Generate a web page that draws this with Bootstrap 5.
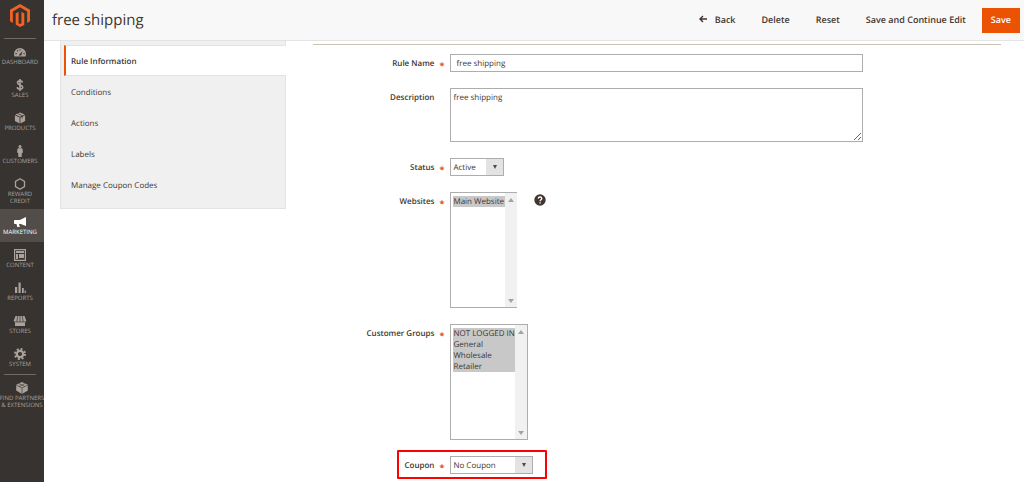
<!DOCTYPE html>
<html lang="en">
<head>
<meta charset="utf-8">
<meta name="viewport" content="width=device-width, initial-scale=1">
<title>free shipping</title>
<link rel="stylesheet" href="https://cdn.jsdelivr.net/npm/bootstrap@5.3.0/dist/css/bootstrap.min.css">
<style>
body{font-family:"Open Sans",sans-serif;font-size:8px;line-height:11px;color:#41362f;background:#fff;text-rendering:geometricPrecision}
input,select,textarea,button{text-rendering:inherit}
.side-menu{width:44px;background:#373330;color:#aaa29b}
.side-menu a{color:inherit;min-height:33px;padding:7px 4px 2px 0;font-size:6px;line-height:7px;white-space:nowrap}
.side-menu svg{width:14px;height:12px;margin-bottom:1px;fill:currentColor}
.side-menu .brand{height:38px;padding-top:4px}
.side-menu .brand svg{width:20px;height:23px;fill:#f26322;margin:0}
.side-menu a.current{background:#524d49;color:#fff}
.rule{height:1px;margin:0 8px 0 4px;background:#736963}
.top-bar{height:41px;background:#f8f8f8;border-bottom:1px solid #e3e3e3;padding:0 4px 0 8px}
.top-bar h1{font-size:15px;line-height:20px;margin:0;color:#41362f}
.top-bar .btn{font-size:9px;line-height:13px;font-weight:600;color:#41362f;padding:5px 13px 7px;border:0;border-radius:0}
.top-bar .btn-save{background:#eb5202;color:#fff;padding:5px 9px 7px;min-height:25px;margin-left:3px}
.page-body{padding:0 23px 0 16px;column-gap:27px}
.tabs{flex:0 0 24%;background:#f0f0f0;border:1px solid #e3e3e3;border-top:0;padding:4px 0 8px 3px}
.tabs a{height:31px;padding:2px 0 0 7px;color:#41362f}
.tabs a.current{background:#fff;border-left:2px solid #eb5202;padding-left:5px;font-weight:600;border-top:1px solid #e3e3e3;border-bottom:1px solid #e3e3e3;margin-right:-1px}
.edit-form{margin-top:3px;border-top:1px solid #cac3b4;padding-top:9px;min-width:0}
.field{margin-bottom:16px}
.field>label{flex:0 0 20%;text-align:right;padding:4px 16px 0 0;font-weight:600;position:relative}
.field .req::after{content:"*";position:absolute;right:6px;top:6px;color:#eb5202;font-size:9px;font-weight:700}
.wide{flex:0 0 60%}
.field .form-control,.field .form-select{font-size:8px;line-height:11px;color:#41362f;border:1px solid #adadad;border-radius:0;padding:3px 5px 2px;min-height:18px;height:18px}
.field textarea.form-control{height:54px;padding:3px 2px}
.field .form-select{padding:3px 18px 2px 2px;background:linear-gradient(#e3e3e3,#e3e3e3) right/17px 100% no-repeat}
.pick{position:relative}
.pick::after{content:"";position:absolute;right:7px;top:7px;border:2px solid transparent;border-top:4px solid #514943;border-bottom:0;pointer-events:none}
.w-status{width:54px}.w-coupon{width:83px}.w-sites{width:67px}.w-groups{width:78px}
.listbox{height:116px;border:1px solid #adadad}
.listbox select{flex:1;min-width:0;border:0;outline:0;padding:3px 0 2px 2px;overflow:hidden;font-size:8px;color:#41362f;background:#fff}
.listbox option{padding:0;min-height:11px;line-height:11px}
.listbox option:checked{background:#c8c8c8 linear-gradient(#c8c8c8,#c8c8c8);color:#41362f}
.track{width:12px;background:#f1f1f1;padding:5px 0 4px}
.track svg{width:6px;height:4px;fill:#a3a3a3}
.help{width:12px;height:12px;margin:2px 0 0 17px}
.marked{position:relative}
.marked::before{content:"";position:absolute;left:calc(20% - 53px);width:150px;top:-6px;bottom:-5px;border:2px solid #f00;border-radius:1px;pointer-events:none}
</style>
</head>
<body>
<div class="d-flex min-vh-100">
<nav class="side-menu flex-shrink-0 overflow-hidden" aria-label="Main menu">
  <a href="#" class="brand d-flex flex-column align-items-center" aria-label="Home"><svg viewBox="0 0 40 46"><path d="M20 0 40 11.500v23l-5.700 3.300v-23L20 6.600 5.700 14.800v23L0 34.500v-23zM17.100 15.500v23l2.900 1.700 2.900-1.700v-23l5.700 3.300v23L20 46l-8.600-4.900V18.800z"/></svg></a>
  <div class="rule"></div>
  <a href="#" class="d-flex flex-column align-items-center text-decoration-none"><svg viewBox="0 0 14 12"><path fill-rule="evenodd" d="M1.500 10.500A6 6 0 0 1 1 8a6 6 0 0 1 12 0c0 1-.2 1.800-.5 2.500zM6 9.500h2.200L9.700 5 6.300 8.500zM2.500 7v1.200h1.200V7zM4 4.300v1.200h1.200V4.300zM6.400 3.200v1.200h1.200V3.200zM10.500 7v1.200h1.200V7z"/></svg>DASHBOARD</a>
  <a href="#" class="d-flex flex-column align-items-center text-decoration-none"><svg viewBox="0 0 14 12"><path d="M7 0v12M9.500 3.700C9 1.200 4.500 1.300 4.500 3.700c0 2.600 5.200 1.800 5.200 4.500 0 2.700-5.100 2.600-5.500-.1" fill="none" stroke="currentColor" stroke-width="1.600"/></svg>SALES</a>
  <a href="#" class="d-flex flex-column align-items-center text-decoration-none"><svg viewBox="0 0 14 12"><path d="m7 .5 4.700 2L7 4.700 2.300 2.500zM1.900 3.300l4.700 2.200v6L1.900 9zM12.100 3.300 7.400 5.500v6L12.100 9z"/><path d="m4.500 1.500 4.700 2.200v2.600" stroke="#373330" stroke-width=".8" fill="none"/></svg>PRODUCTS</a>
  <a href="#" class="d-flex flex-column align-items-center text-decoration-none"><svg viewBox="0 0 14 12"><circle cx="7" cy="1.500" r="1.500"/><path d="M5.300 3.300h3.400q.8.200.9 1L10 7.800H8.900L8.600 12H5.400L5.100 7.800H4l.4-3.500q.1-.8.900-1z"/></svg>CUSTOMERS</a>
  <a href="#" class="d-flex flex-column align-items-center text-decoration-none text-center pb-1"><svg viewBox="0 0 14 12"><path d="m7 .8 4.500 2.600v5.200L7 11.200 2.500 8.600V3.400z" fill="none" stroke="currentColor" stroke-width="1.300"/></svg>REWARD<br>CREDIT</a>
  <a href="#" class="current d-flex flex-column align-items-center text-decoration-none" aria-current="page"><svg viewBox="0 0 14 12"><path d="M13 1v9L7.800 8H6l.8 3H4.300L3.500 8H1.300Q.5 6 1.300 4h5.500z"/></svg>MARKETING</a>
  <a href="#" class="d-flex flex-column align-items-center text-decoration-none"><svg viewBox="0 0 14 12"><path fill-rule="evenodd" d="M1 0h12v12H1zM2.200 1.200v9.600h9.600V1.200z"/><path d="M3 2h8v2H3zM3 5h2v5H3zM6 5h5v4H6z"/></svg>CONTENT</a>
  <a href="#" class="d-flex flex-column align-items-center text-decoration-none"><svg viewBox="0 0 14 12"><path d="M2 5h2.200v6H2zM5.500.5h2.200V11H5.500zM9 6h1.800v5H9zM11.600 8.500h1.200V11h-1.200z"/></svg>REPORTS</a>
  <a href="#" class="d-flex flex-column align-items-center text-decoration-none"><svg viewBox="0 0 14 12"><path d="M2.500 1h9l1.800 5q-.3 1.400-1.300 1.400V11H2V7.400Q1 7.400.7 6z"/><path d="M4.700 1 3.800 6.700M7 1v5.700M9.300 1l.9 5.700M1 6.900h12" stroke="#373330" stroke-width=".7" fill="none"/></svg>STORES</a>
  <a href="#" class="d-flex flex-column align-items-center text-decoration-none"><svg viewBox="0 0 14 12"><circle cx="7" cy="6" r="3.200" fill="none" stroke="currentColor" stroke-width="2.200"/><circle cx="7" cy="6" r="5" fill="none" stroke="currentColor" stroke-width="2" stroke-dasharray="2 1.927"/></svg>SYSTEM</a>
  <div class="rule"></div>
  <a href="#" class="d-flex flex-column align-items-center text-decoration-none text-center px-0"><svg viewBox="0 0 14 12"><path d="M7 0 12.800 2.800V8.500L7 12 1.200 8.500V2.800z"/><path d="M1.200 3 7 6l5.800-3M7 6v6M4 1.600l5.800 3M9.900 1.600l-5.800 3" stroke="#373330" stroke-width=".6" fill="none"/></svg>FIND PARTNERS<br>&amp; EXTENSIONS</a>
</nav>
<main class="flex-grow-1">
  <header class="top-bar d-flex align-items-center justify-content-between">
    <h1 class="fw-normal">free shipping</h1>
    <div class="d-flex align-items-center">
      <button type="button" class="btn d-flex align-items-center gap-2"><svg width="8" height="8" viewBox="0 0 8 8" fill="none" stroke="currentColor" stroke-width="1.400"><path d="M8 4H1M4 1 1 4l3 3"/></svg>Back</button>
      <button type="button" class="btn">Delete</button>
      <button type="button" class="btn">Reset</button>
      <button type="button" class="btn">Save and Continue Edit</button>
      <button type="button" class="btn btn-save">Save</button>
    </div>
  </header>
  <div class="page-body d-flex align-items-start">
    <nav class="tabs" aria-label="Rule sections">
      <a href="#" class="current d-flex align-items-center text-decoration-none">Rule Information</a>
      <a href="#" class="d-flex align-items-center text-decoration-none">Conditions</a>
      <a href="#" class="d-flex align-items-center text-decoration-none">Actions</a>
      <a href="#" class="d-flex align-items-center text-decoration-none">Labels</a>
      <a href="#" class="d-flex align-items-center text-decoration-none">Manage Coupon Codes</a>
    </nav>
    <form class="edit-form flex-grow-1">
      <div class="field d-flex align-items-start"><label class="req" for="name">Rule Name</label><div class="wide"><input class="form-control" id="name" value="free shipping"></div></div>
      <div class="field d-flex align-items-start"><label for="desc">Description</label><div class="wide d-flex"><textarea class="form-control" id="desc">free shipping</textarea></div></div>
      <div class="field d-flex align-items-start"><label class="req" for="status">Status</label><div class="pick w-status"><select class="form-select" id="status"><option>Active</option><option>Inactive</option></select></div></div>
      <div class="field d-flex align-items-start"><label class="req" for="sites">Websites</label>
        <div class="listbox w-sites d-flex border-end-0"><select multiple id="sites"><option selected>Main Website</option></select><div class="track d-flex flex-column justify-content-between align-items-center"><svg viewBox="0 0 6 4"><path d="M0 4h6L3 0z"/></svg><svg viewBox="0 0 6 4"><path d="M0 0h6L3 4z"/></svg></div></div>
        <svg class="help" viewBox="0 0 12 12" role="img" aria-label="Help"><circle cx="6" cy="6" r="5.700" fill="#41362f"/><path d="M4.200 4.600C4.300 2.400 7.800 2.500 7.800 4.500 7.800 5.800 6.100 5.800 6.100 7.300M6.100 8.200v1.300" fill="none" stroke="#fff" stroke-width="1.300"/></svg></div>
      <div class="field d-flex align-items-start"><label class="req" for="groups">Customer Groups</label>
        <div class="listbox w-groups d-flex"><select multiple id="groups"><option selected>NOT LOGGED IN</option><option selected>General</option><option selected>Wholesale</option><option selected>Retailer</option></select><div class="track d-flex flex-column justify-content-between align-items-center"><svg viewBox="0 0 6 4"><path d="M0 4h6L3 0z"/></svg><svg viewBox="0 0 6 4"><path d="M0 0h6L3 4z"/></svg></div></div></div>
      <div class="field marked d-flex align-items-start mb-0"><label class="req" for="coupon">Coupon</label><div class="pick w-coupon"><select class="form-select" id="coupon"><option>No Coupon</option><option>Specific Coupon</option></select></div></div>
    </form>
  </div>
</main>
</div>
<script src="https://cdn.jsdelivr.net/npm/bootstrap@5.3.0/dist/js/bootstrap.bundle.min.js"></script>
</body>
</html>
